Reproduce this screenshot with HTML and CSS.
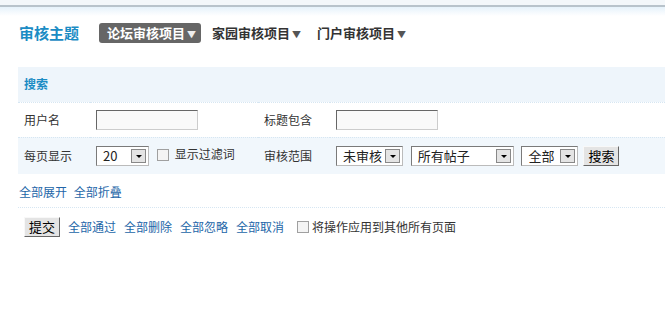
FILE: index.html
```html
<!DOCTYPE html>
<html lang="zh-CN">
<head>
  <meta charset="UTF-8" />
  <title>审核主题</title>
  <link rel="stylesheet" href="styles.css">
</head>
<body>

  <div class="topbar"></div>

  <div class="itemtitle">
    <h3>审核主题</h3>
    <ul class="tabs">
      <li class="current"><a href="#">论坛审核项目<i>▼</i></a></li>
      <li><a href="#">家园审核项目<i>▼</i></a></li>
      <li><a href="#">门户审核项目<i>▼</i></a></li>
    </ul>
  </div>

  <form id="form">
    <table class="tb">
      <tr class="partition">
        <th colspan="4">搜索</th>
      </tr>
      <tr>
        <td class="lbl">用户名</td>
        <td><span class="txt"></span></td>
        <td class="lbl">标题包含</td>
        <td><span class="txt"></span></td>
      </tr>
      <tr class="hover">
        <td class="lbl">每页显示</td>
        <td>
          <span class="sel w52">20<b class="arr"></b></span>
          <span class="chk"></span>显示过滤词
        </td>
        <td class="lbl">审核范围</td>
        <td>
          <span class="sel w67">未审核<b class="arr"></b></span>
          <span class="sel w103">所有帖子<b class="arr"></b></span>
          <span class="sel w56">全部<b class="arr"></b></span><span class="btn">搜索</span>
        </td>
      </tr>
    </table>

    <div class="links">
      <a href="#">全部展开</a>
      <a href="#">全部折叠</a>
    </div>

    <div class="ops">
      <span class="btn">提交</span>
      <a href="#">全部通过</a>
      <a href="#">全部删除</a>
      <a href="#">全部忽略</a>
      <a href="#">全部取消</a>
      <span class="chk"></span>将操作应用到其他所有页面
    </div>
  </form>

</body>
</html>
```

FILE: styles.css
```css
:root {
  --blue: #1b8cc4;
  --link: #2366a8;
  --soft: #f1f7fc;
  --dots: #d6e6f2;
}

* {
  box-sizing: border-box;
}

body {
  margin: 0;
  background: #fff;
  color: #333;
  font: 12px/18px "Noto Sans CJK SC", "Liberation Sans", sans-serif;
}

a {
  color: var(--link);
  text-decoration: none;
}

.topbar {
  height: 16px;
  background: linear-gradient(#f3f7fa 0, #f3f7fa 5px, #b8c3cb 5px, #b8c3cb 7px, #e6f2fb 7px, #fff 16px);
}

.itemtitle {
  display: flex;
  align-items: center;
  height: 20px;
  margin: 7px 0 0 19px;
}

.itemtitle h3 {
  margin: 0 20px 0 0;
  color: var(--blue);
  font-size: 15px;
  font-weight: bold;
}

.tabs {
  display: flex;
  margin: 0;
  padding: 0;
  list-style: none;
  gap: 11px;
}

.tabs li a {
  display: block;
  height: 20px;
  padding: 0 5px 0 8px;
  border-radius: 3px;
  color: #333;
  font-size: 13px;
  font-weight: bold;
  line-height: 20px;
}

.tabs li + li a {
  padding-left: 0;
}

.tabs li.current a {
  background: #666;
  color: #fff;
}

.tabs i {
  font-style: normal;
  font-size: 9px;
  margin-left: 2px;
  color: #555;
}

.tabs li.current i {
  color: #eee;
}

form {
  margin: 24px 0 0 18px;
}

.tb {
  width: 100%;
  border-collapse: collapse;
}

.tb th,
.tb td {
  height: 35px;
  padding: 0 0 0 6px;
  text-align: left;
  vertical-align: middle;
  white-space: nowrap;
}

.tb tr + tr td {
  border-top: 1px dotted var(--dots);
}

.partition th {
  background: #eef5fb;
  color: var(--blue);
  font-weight: bold;
  border-bottom: 1px dotted var(--dots);
}

.hover td {
  background: var(--soft);
  height: 37px;
}

.tb td.lbl {
  width: 72px;
}

.tb td:nth-child(2) {
  width: 168px;
}

.txt {
  display: inline-block;
  width: 102px;
  height: 20px;
  vertical-align: middle;
  background: #f9f9f9;
  border: 1px solid #ccc;
  border-top-color: #666;
  border-left-color: #666;
}

.sel {
  position: relative;
  display: inline-block;
  height: 20px;
  padding: 0 0 0 6px;
  margin-right: 5px;
  vertical-align: middle;
  background: #fff;
  border: 1px solid #7a7a7a;
  border-right-color: #bbb;
  border-bottom-color: #bbb;
  font-size: 13px;
  line-height: 18px;
  color: #222;
}

.w52 { width: 53px; }
.w67 { width: 67px; }
.w103 { width: 103px; }
.w56 { width: 57px; }

.arr {
  position: absolute;
  top: 2px;
  right: 2px;
  width: 15px;
  height: 14px;
  background: #e4e4e4;
  border: 1px solid #888;
}

.arr::after {
  content: "";
  position: absolute;
  left: 4px;
  top: 5px;
  border: 3px solid transparent;
  border-top: 3px solid #000;
  border-bottom: 0;
}

.chk {
  display: inline-block;
  width: 12px;
  height: 12px;
  margin: 0 6px 0 0;
  vertical-align: -2px;
  background: #f4f4f4;
  border: 1px solid #a0a0a0;
}

.btn {
  display: inline-block;
  height: 20px;
  padding: 0 4px;
  vertical-align: middle;
  background: #e4e4e4;
  border: 1px solid #f8f8f8;
  border-right-color: #666;
  border-bottom-color: #666;
  color: #000;
  font-size: 13px;
  line-height: 18px;
}

.links {
  padding: 9px 0 0 1px;
  height: 34px;
  border-bottom: 1px dotted var(--dots);
}

.links a {
  margin-right: 4px;
}

.ops {
  display: flex;
  align-items: center;
  padding: 9px 0 0 6px;
}

.ops .btn {
  margin-right: 8px;
}

.ops a {
  margin-right: 8px;
}

.ops a:last-of-type {
  margin-right: 13px;
}

.ops .chk {
  margin-right: 3px;
  vertical-align: 0;
}
```
